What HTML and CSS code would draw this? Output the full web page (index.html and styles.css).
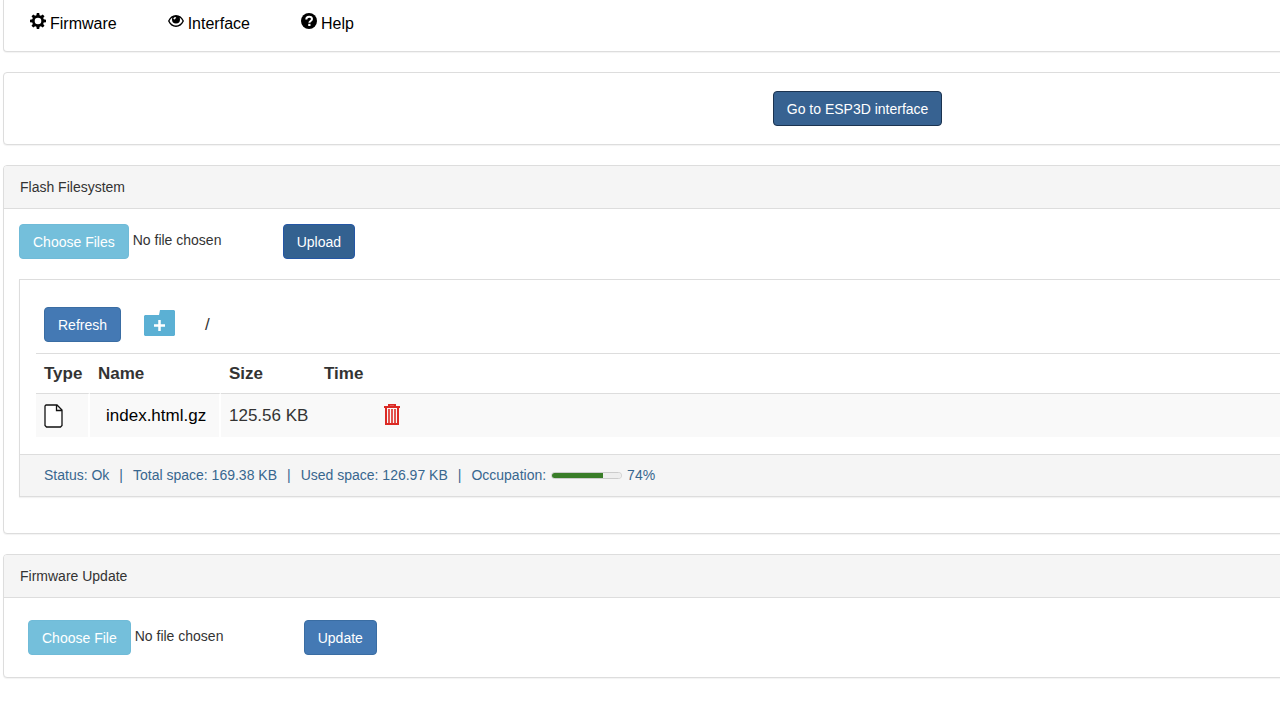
FILE: index.html
```
<!DOCTYPE html>
<html lang="en">

<head>
    <meta charset="UTF-8">
    <meta name="viewport" content="width=device-width, initial-scale=1.0">
    <title>ESP3D</title>
    <link rel="stylesheet" href="styles.css">
</head>

<body>
    <div class="page">
        <nav class="panel menu">
            <a href="#firmware">
                <svg class="icon" viewBox="0 0 16 16"><path fill-rule="evenodd" d="M6.800 0h2.400l.4 2.200 1.300.5 1.800-1.300 1.800 1.800-1.300 1.800.5 1.300 2.300.4v2.500l-2.300.4-.5 1.300 1.300 1.900-1.800 1.700-1.800-1.300-1.300.5L9.200 16H6.800l-.4-2.300-1.300-.5-1.800 1.300-1.800-1.700 1.300-1.900-.5-1.300L0 9.200V6.700l2.300-.4.5-1.300L1.500 3.200l1.800-1.800 1.800 1.300 1.300-.5zM8 4.700a3.300 3.300 0 1 0 0 6.600 3.300 3.300 0 0 0 0-6.600z" /></svg>
                <span>Firmware</span>
            </a>
            <a href="#interface">
                <svg class="icon" viewBox="0 0 16 16"><path fill-rule="evenodd" d="M8 2c3.500 0 6.300 2.300 8 6-1.700 3.700-4.500 6-8 6S1.700 11.700 0 8c1.700-3.700 4.500-6 8-6zM4.400 4.600C3.200 5.300 2.200 6.600 1.500 8c1.500 2.900 3.800 4.500 6.500 4.500s5-1.600 6.500-4.500c-.7-1.400-1.700-2.700-2.900-3.400.3.600.4 1.200.4 1.900a4 4 0 0 1-8 0c0-.7.1-1.300.4-1.900zM7.400 4c-1.100 0-2 .9-2 2l1.600.5C7 5.600 7.600 5.100 8.400 5z" /></svg>
                <span>Interface</span>
            </a>
            <a href="#help">
                <svg class="icon" viewBox="0 0 16 16"><circle cx="8" cy="8" r="8" /><path d="M5.300 6.400C5.300 4.500 6.400 3.700 8.100 3.700s2.900.9 2.900 2.400c0 1.900-2.600 1.900-2.600 3.600" fill="none" stroke="#fff" stroke-width="2" /><path d="M7.200 10.800h2.300V13H7.200z" fill="#fff" /></svg>
                <span>Help</span>
            </a>
        </nav>

        <div class="panel go">
            <button class="btn btn-go" type="button">Go to ESP3D interface</button>
        </div>

        <section class="panel">
            <div class="heading">Flash Filesystem</div>
            <div class="body">
                <div class="row">
                    <input type="file" id="files" multiple hidden>
                    <button class="btn btn-info" type="button" onclick="document.getElementById('files').click()">Choose Files</button>
                    <label class="chosen" for="files">No file chosen</label>
                    <button class="btn btn-upload" type="button">Upload</button>
                </div>

                <div class="panel files">
                    <div class="toolbar">
                        <button class="btn" type="button">Refresh</button>
                        <button class="folder" type="button" aria-label="New folder">
                            <svg width="31" height="26" viewBox="0 0 31 26"><path d="M1 5h14l1-5h14l1 1v24l-1 1H1l-1-1V6z" fill="#5bb0d4" /><path d="M15.500 10v11M10 15.500h11" stroke="#fff" stroke-width="2.500" /></svg>
                        </button>
                        <span>/</span>
                    </div>
                    <table>
                        <thead>
                            <tr>
                                <th class="col-type">Type</th>
                                <th class="col-name">Name</th>
                                <th class="col-size">Size</th>
                                <th class="col-time">Time</th>
                                <th></th>
                            </tr>
                        </thead>
                        <tbody>
                            <tr>
                                <td>
                                    <svg width="19" height="24" viewBox="0 0 19 24"><path d="M2 1h11l5 5v15.500L16.500 23h-14L1 21.500V2zM12.500 1v5.500H18" fill="#fff" stroke="#111" stroke-width="1.300" /></svg>
                                </td>
                                <td><a class="file" href="#index">index.html.gz</a></td>
                                <td>125.56 KB</td>
                                <td></td>
                                <td>
                                    <button class="trash" type="button" aria-label="Delete">
                                        <svg width="16" height="21" viewBox="0 0 16 21" fill="none" stroke="#dc2a24"><path d="M0 3h16M5 2V.7h6V2" stroke-width="2" /><path d="M2 4v16h12V4" stroke-width="2" /><path d="M5 5v14M8 5v14M11 5v14" stroke-width="1.600" /></svg>
                                    </button>
                                </td>
                            </tr>
                        </tbody>
                    </table>
                    <div class="status">
                        <span>Status: Ok</span>
                        <span>|</span>
                        <span>Total space: 169.38 KB</span>
                        <span>|</span>
                        <span>Used space: 126.97 KB</span>
                        <span>|</span>
                        <label class="occupation">Occupation: <progress max="100" value="74"></progress> 74%</label>
                    </div>
                </div>
            </div>
        </section>

        <section class="panel">
            <div class="heading">Firmware Update</div>
            <div class="body update">
                <div class="row">
                    <input type="file" id="firmware-file" hidden>
                    <button class="btn btn-info" type="button" onclick="document.getElementById('firmware-file').click()">Choose File</button>
                    <label class="chosen chosen-wide" for="firmware-file">No file chosen</label>
                    <button class="btn" type="button">Update</button>
                </div>
            </div>
        </section>
    </div>
</body>

</html>
```
FILE: styles.css
```
* {
    box-sizing: border-box;
}

body {
    margin: 0;
    overflow-x: hidden;
    background: #fff;
    color: #333;
    font-family: "Liberation Sans", Arial, sans-serif;
    font-size: 14px;
    line-height: 20px;
}

/* wider than the window, the panels run off to the right */
.page {
    width: 134%;
    padding: 0 3px;
}

.panel {
    margin-bottom: 20px;
    border: 1px solid #ddd;
    border-radius: 4px;
    background: #fff;
    box-shadow: 0 1px 1px rgba(0, 0, 0, .05);
}

.menu {
    display: flex;
    gap: 51px;
    padding: 13px 26px 16px;
    border-top: 0;
    border-top-left-radius: 0;
    font-size: 16px;
    line-height: 22px;
}

.menu a {
    display: flex;
    gap: 4px;
    color: #000;
    text-decoration: none;
}

.icon {
    width: 16px;
    height: 16px;
}

.go {
    display: flex;
    justify-content: center;
    padding: 18px 16px;
}

.heading {
    padding: 11px 16px;
    border-bottom: 1px solid #ddd;
    border-radius: 3px 3px 0 0;
    background: #f5f5f5;
}

.body {
    padding: 15px 15px 16px;
}

.update {
    padding: 22px 24px;
}

.row {
    display: flex;
    gap: 4px;
}

.btn {
    height: 35px;
    padding: 0 13px;
    border: 1px solid #3a6da3;
    border-radius: 4px;
    background: #4479b4;
    color: #fff;
    font-family: inherit;
    font-size: 14px;
    line-height: 20px;
    cursor: pointer;
}

.btn-info {
    border-color: #70bbd8;
    background: #74bfdb;
}

.btn-go {
    border-color: #1b3350;
    background: #376291;
}

.btn-upload {
    border-color: #2456a5;
    background: #336190;
}

.chosen {
    width: 146px;
    padding-top: 6px;
}

.chosen-wide {
    width: 165px;
}

.files {
    margin-top: 20px;
    border-radius: 0;
}

.toolbar {
    display: flex;
    align-items: center;
    padding: 27px 24px 11px;
}

.toolbar span {
    margin-left: 30px;
    font-size: 17px;
}

.folder {
    display: flex;
    margin-left: 23px;
    padding: 0 0 4px;
    border: 0;
    background: none;
    cursor: pointer;
}

table {
    width: calc(100% - 32px);
    margin: 0 16px 17px;
    border-spacing: 0;
    border-top: 1px solid #ddd;
    table-layout: fixed;
    font-size: 17px;
    white-space: nowrap;
}

th,
td {
    height: 40px;
    padding: 0 8px;
    border-bottom: 1px solid #ddd;
    text-align: left;
}

td {
    height: 43px;
    border-bottom: 0;
    background: #f9f9f9;
}

th:nth-child(-n+2),
td:nth-child(-n+2) {
    border-right: 2px solid #fff;
}

.col-type {
    width: 54px;
}

.col-name {
    width: 131px;
}

.col-size {
    width: 95px;
}

.col-time {
    width: 60px;
}

td svg {
    display: block;
}

.file {
    padding-left: 8px;
    color: #000;
    text-decoration: none;
}

.trash {
    padding: 2px 0 0;
    border: 0;
    background: none;
    cursor: pointer;
}

.status {
    display: flex;
    gap: 10px;
    padding: 10px 24px 11px;
    border-top: 1px solid #ddd;
    background: #f5f5f5;
    color: #38678f;
}

.occupation {
    display: flex;
    align-items: center;
    gap: 5px;
}

progress {
    width: 71px;
    height: 7px;
    border: 1px solid #ccc;
    border-radius: 4px;
    overflow: hidden;
    background: #eee;
    appearance: none;
}

progress::-webkit-progress-bar {
    background: #eee;
}

progress::-webkit-progress-value {
    background: #397d28;
}
```
